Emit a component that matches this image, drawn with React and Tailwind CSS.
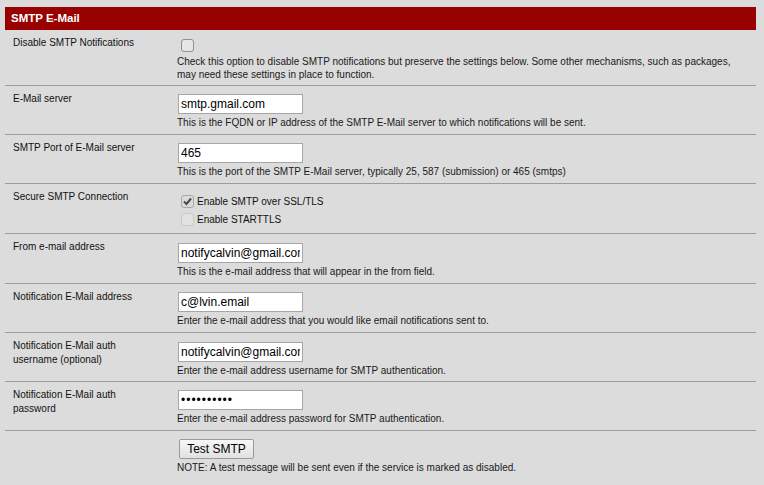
import React from "react"

const font = { fontFamily: '"Liberation Sans", Arial, sans-serif' }

const Row = ({ label, pt = "pt-[6px]", children, className = "" }) => (
  <div className="grid grid-cols-[172px_1fr] border-b border-[#9c9c9c]">
    <div className={`pl-[8px] pr-2 ${pt} text-[10px] leading-[14px] text-[#111]`}>{label}</div>
    <div className={className}>{children}</div>
  </div>
)

const Help = ({ children, className = "" }) => (
  <div className={`text-[10px] leading-[13px] text-[#1a1a1a] ${className}`}>{children}</div>
)

const Box = ({ checked, disabled }) => (
  <span
    className={`flex h-[13px] w-[13px] shrink-0 items-center justify-center rounded-[3px] border ${
      disabled
        ? "border-[#c9c9c9] bg-[#e2e2e2]"
        : checked
        ? "border-[#a8a8a8] bg-[#dadada]"
        : "border-[#8f8f8f] bg-[#e6e6e6]"
    }`}
  >
    {checked && (
      <svg width="9" height="9" viewBox="0 0 9 9">
        <path d="M1 4.5 L3.5 7 L8 1.5" fill="none" stroke="#4a4a4a" strokeWidth="2" />
      </svg>
    )}
  </span>
)

const TextInput = ({ value, type = "text" }) => (
  <input
    type={type}
    readOnly
    value={value}
    className={`block h-[20px] w-[125px] border border-[#a6a6a6] bg-white px-[2px] text-[12px] text-black outline-none ${
      type === "password" ? "tracking-[1px]" : ""
    }`}
    style={font}
  />
)

const InputRow = ({ label, value, help, type, pt = "pt-[8px]", pb = "pb-[5px]" }) => (
  <Row label={label} className={`${pt} ${pb} pl-[1px]`}>
    <TextInput value={value} type={type} />
    <Help className="mt-[2px] -ml-[1px]">{help}</Help>
  </Row>
)

export default function App() {
  return (
    <div className="min-h-screen bg-[#dcdcdc] pl-[5px] pt-[7px]" style={font}>
      <div className="w-[751px]">
        <div className="flex h-[23px] items-center bg-[#990000] px-[6px] text-[11.5px] font-bold text-white">
          SMTP E-Mail
        </div>

        <Row label="Disable SMTP Notifications" className="pt-[9px] pb-[4px]">
          <div className="flex pl-[4px]">
            <Box />
          </div>
          <Help className="mt-[3px]">
            Check this option to disable SMTP notifications but preserve the settings below. Some other mechanisms, such as packages,
            <br />
            may need these settings in place to function.
          </Help>
        </Row>

        <InputRow
          label="E-Mail server"
          value="smtp.gmail.com"
          help="This is the FQDN or IP address of the SMTP E-Mail server to which notifications will be sent."
        />

        <InputRow
          label="SMTP Port of E-Mail server"
          value="465"
          help="This is the port of the SMTP E-Mail server, typically 25, 587 (submission) or 465 (smtps)"
        />

        <Row label="Secure SMTP Connection" className="pt-[8px] pb-[5px] pl-[4px]">
          <div className="flex h-[18px] items-center gap-[3px] text-[10px] text-[#111]">
            <Box checked />
            <span>Enable SMTP over SSL/TLS</span>
          </div>
          <div className="flex h-[18px] items-center gap-[3px] text-[10px] text-[#111]">
            <Box disabled />
            <span>Enable STARTTLS</span>
          </div>
        </Row>

        <InputRow
          label="From e-mail address"
          value="notifycalvin@gmail.com"
          pt="pt-[9px]"
          help="This is the e-mail address that will appear in the from field."
        />

        <InputRow
          label="Notification E-Mail address"
          value="c@lvin.email"
          help="Enter the e-mail address that you would like email notifications sent to."
        />

        <InputRow
          label={
            <>
              Notification E-Mail auth
              <br />
              username (optional)
            </>
          }
          value="notifycalvin@gmail.com"
          pt="pt-[9px]"
          pb="pb-[4px]"
          help="Enter the e-mail address username for SMTP authentication."
        />

        <InputRow
          label={
            <>
              Notification E-Mail auth
              <br />
              password
            </>
          }
          value="mypassword"
          type="password"
          help="Enter the e-mail address password for SMTP authentication."
        />

        <div className="grid grid-cols-[172px_1fr]">
          <div />
          <div className="pt-[8px] pl-[2px]">
            <button
              className="block h-[20px] w-[75px] rounded-[2px] border border-[#9a9a9a] bg-gradient-to-b from-[#f7f7f7] to-[#e1e1e1] text-[12px] leading-none text-black"
              style={font}
            >
              Test SMTP
            </button>
            <Help className="mt-[2px] -ml-[2px]">
              NOTE: A test message will be sent even if the service is marked as disabled.
            </Help>
          </div>
        </div>
      </div>
    </div>
  )
}
